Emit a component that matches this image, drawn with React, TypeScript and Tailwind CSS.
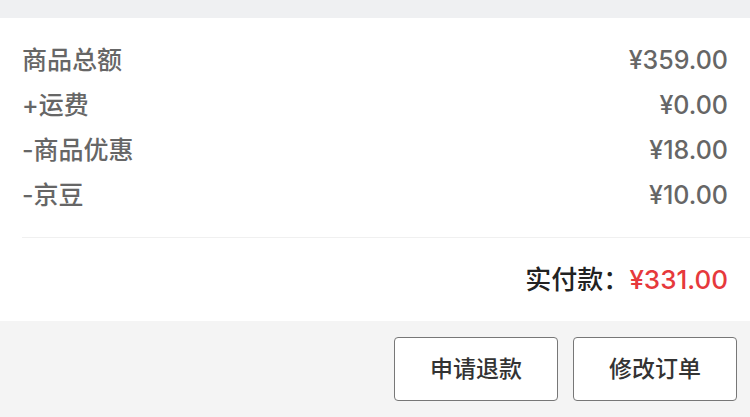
const rows = [
	{ label: '商品总额', value: '¥359.00' },
	{ label: '+运费', value: '¥0.00' },
	{ label: '-商品优惠', value: '¥18.00' },
	{ label: '-京豆', value: '¥10.00' },
];

export default function App() {
	return (
		<div
			className="flex h-[417px] w-[750px] flex-col bg-[#f4f4f4] font-medium"
			style={{ fontFamily: 'Inter, "Noto Sans CJK SC", "Noto Sans", sans-serif' }}
		>
			<div className="h-[18px] shrink-0 bg-[#eff0f2]" />
			<div className="shrink-0 bg-white">
				<div className="ml-[22px] border-b border-[#f0f0f0] pb-[19px] pr-[22px] pt-[20px]">
					{rows.map((row) => (
						<div key={row.label} className="flex h-[45px] items-center justify-between text-[25px] text-[#666]">
							<span>{row.label}</span>
							<span>{row.value}</span>
						</div>
					))}
				</div>
				<div className="flex h-[83px] items-center justify-end pr-[22px] text-[26px]">
					<span className="text-[#222]">实付款：</span>
					<span className="text-[#e6393c]">¥331.00</span>
				</div>
			</div>
			<div className="flex justify-end gap-[15px] pr-[13px] pt-[16px]">
				<button
					type="button"
					className="flex h-[64px] w-[164px] items-center justify-center rounded-[4px] border border-[#777] bg-white text-[23px] text-[#333]"
				>
					申请退款
				</button>
				<button
					type="button"
					className="flex h-[64px] w-[164px] items-center justify-center rounded-[4px] border border-[#777] bg-white text-[23px] text-[#333]"
				>
					修改订单
				</button>
			</div>
		</div>
	);
}
